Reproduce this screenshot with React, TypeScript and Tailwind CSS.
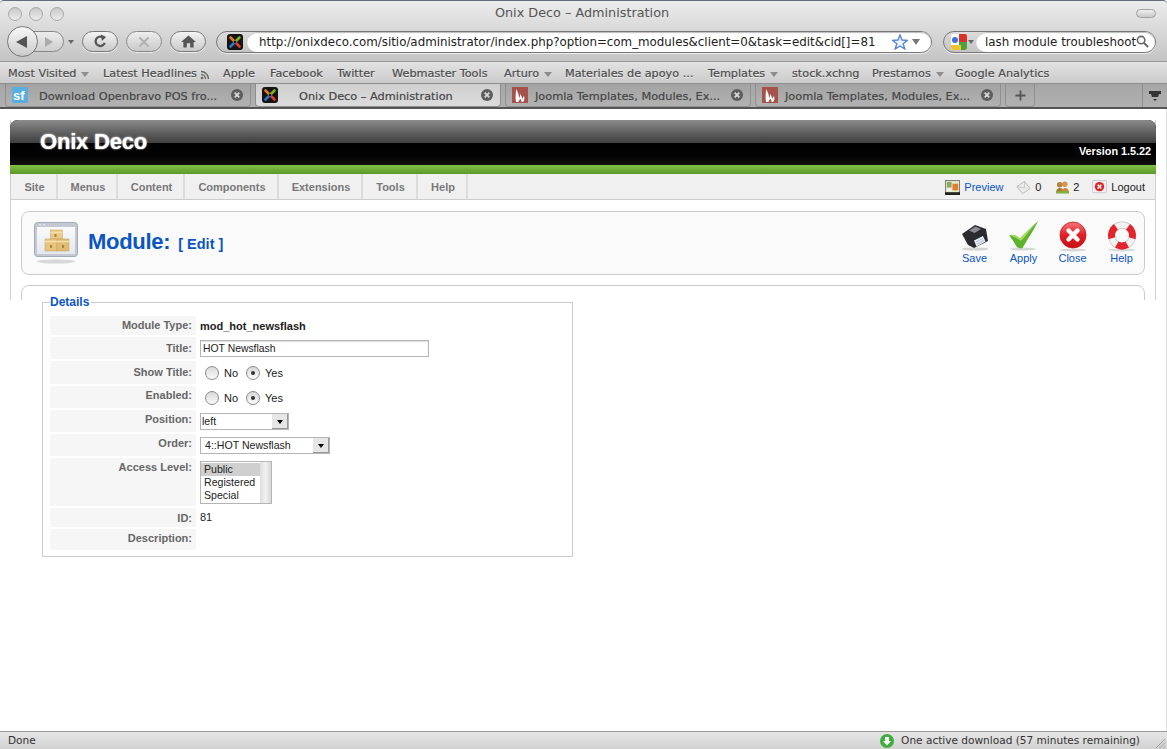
import React from "react";

const chrome = "font-['DejaVu_Sans',sans-serif]";
const page = "font-['Liberation_Sans',Arial,sans-serif]";

function Joomla({ className = "" }: { className?: string }) {
  return (
    <svg viewBox="0 0 16 16" className={className}>
      <rect x="0" y="0" width="16" height="16" rx="3" fill="#141414" />
      <path d="M3.5 3.5 L8 8" stroke="#e8791a" strokeWidth="2.6" strokeLinecap="round" />
      <path d="M12.5 3.5 L8 8" stroke="#7ab51d" strokeWidth="2.6" strokeLinecap="round" />
      <path d="M12.5 12.5 L8 8" stroke="#e23b2e" strokeWidth="2.6" strokeLinecap="round" />
      <path d="M3.5 12.5 L8 8" stroke="#2a78c8" strokeWidth="2.6" strokeLinecap="round" />
      <circle cx="8" cy="8" r="1.2" fill="#141414" />
    </svg>
  );
}

function Flame() {
  return (
    <svg viewBox="0 0 16 16" className="w-4 h-4 shrink-0">
      <rect width="16" height="16" fill="#a5524a" />
      <path d="M4 15 C3 10 4 7 4 2 C6 5 7 8 7 11 C8 10 8 9 8 7 C10 9 10 11 10 12 C11 11 11 10 12 9 C13 11 12 14 11 15 L9.5 15 C9.5 13 9 12.5 8 11.5 C8 13 6.5 13.5 6.5 15 Z" fill="#fff" />
    </svg>
  );
}

function SF() {
  return (
    <svg viewBox="0 0 16 16" className="w-4 h-4 shrink-0">
      <rect width="16" height="16" rx="1.5" fill="#58aede" />
      <text x="1" y="13" fontSize="13" fontWeight="700" fill="#fff" fontFamily="Liberation Sans">sf</text>
    </svg>
  );
}

function CloseDot() {
  return (
    <svg viewBox="0 0 12 12" className="w-3 h-3 shrink-0">
      <circle cx="6" cy="6" r="6" fill="#5d5d5d" />
      <path d="M3.7 3.7 L8.3 8.3 M8.3 3.7 L3.7 8.3" stroke="#d8d8d8" strokeWidth="1.8" />
    </svg>
  );
}

function Tab({ icon, label, active, pad }: { icon: React.ReactNode; label: string; active?: boolean; pad: string }) {
  return (
    <div
      className={`w-[246px] h-[23px] flex items-center pl-[6px] pr-[7px] rounded-b-[4px] border border-t-0 ${
        active ? "bg-gradient-to-b from-[#cfcfcf] to-[#dcdcdc] border-[#8f8f8f]" : "bg-gradient-to-b from-[#a3a3a3] to-[#b2b2b2] border-[#909090]"
      }`}
    >
      {icon}
      <span className={`flex-1 text-[11.3px] pt-[4px] text-[#454545] [-webkit-text-stroke:0.2px_#454545] whitespace-nowrap overflow-hidden ${pad}`}>
        {label}
      </span>
      <CloseDot />
    </div>
  );
}

function Arrow() {
  return <span className="inline-block ml-[5px] border-x-[4px] border-x-transparent border-t-[5px] border-t-[#8c8c8c]" />;
}

function Rss() {
  return (
    <svg viewBox="0 0 10 10" className="w-[10px] h-[10px] ml-[3px]">
      <circle cx="2" cy="8" r="1.3" fill="#666" />
      <path d="M1 4.5 A4.5 4.5 0 0 1 5.5 9 M1 1.5 A7.5 7.5 0 0 1 8.5 9" fill="none" stroke="#666" strokeWidth="1.3" />
    </svg>
  );
}

function Bookmark({ label, w, arrow, rss }: { label: string; w: string; arrow?: boolean; rss?: boolean }) {
  return (
    <div className={`${w} shrink-0 flex items-center whitespace-nowrap text-[11.25px] text-[#4b4b4b] [-webkit-text-stroke:0.2px_#4b4b4b] [text-shadow:0_1px_0_#eee]`}>
      {label}
      {arrow && <Arrow />}
      {rss && <Rss />}
    </div>
  );
}

function Pill({ className = "", children }: { className?: string; children: React.ReactNode }) {
  return (
    <div className={`h-[21px] rounded-full border border-[#777] bg-gradient-to-b from-[#f4f4f4] to-[#c9c9c9] flex items-center justify-center shadow-[0_1px_0_#eee] ${className}`}>
      {children}
    </div>
  );
}

function Floppy() {
  return (
    <svg viewBox="0 0 32 32" className="w-8 h-8">
      <ellipse cx="16" cy="28" rx="13" ry="1.6" fill="#d4d4d4" />
      <path d="M3 13 L16 4 L27 8 L29 20 L15 27 L9 24 Z" fill="#2b2b2f" />
      <path d="M10 9.5 L16.5 5.5 L22 8 L15.5 12 Z" fill="#8b8d92" />
      <path d="M15 19.5 L24 15 L26.5 20.5 L17.5 25.5 Z" fill="#e8ecf3" />
      <path d="M17 21 L24 17.5 M18 23 L25 19.5" stroke="#9fb5d6" strokeWidth="0.8" />
    </svg>
  );
}

function Check() {
  return (
    <svg viewBox="0 0 32 32" className="w-8 h-8">
      <ellipse cx="15" cy="28" rx="13" ry="1.5" fill="#d6d6d6" />
      <path d="M1 14.5 C4 13 8 14 12 17.5 C18 11 24 6 30 0 C26 9 19 19 14.5 27 C11 27.5 10 27 8.5 25.5 C6 21 3.5 17 1 14.5 Z" fill="#5fb32c" />
      <path d="M1 14.5 C4 13 8 14 12 17.5 C18 11 24 6 30 0 C24 7 19 13 13 20 C9 17 5 15 1 14.5 Z" fill="#a4dd62" />
    </svg>
  );
}

function XCircle() {
  return (
    <svg viewBox="0 0 32 32" className="w-8 h-8">
      <defs>
        <linearGradient id="xc" x1="0" y1="0" x2="0" y2="1">
          <stop offset="0" stopColor="#f47a7a" />
          <stop offset="0.5" stopColor="#e21f26" />
          <stop offset="1" stopColor="#c70f15" />
        </linearGradient>
      </defs>
      <ellipse cx="16" cy="29" rx="13" ry="1.5" fill="#d6d6d6" />
      <circle cx="16" cy="14" r="13" fill="url(#xc)" stroke="#c9151b" strokeWidth="0.8" />
      <path d="M11.5 9.5 L20.5 18.5 M20.5 9.5 L11.5 18.5" stroke="#fff" strokeWidth="4.4" strokeLinecap="round" />
    </svg>
  );
}

function Lifebuoy() {
  return (
    <svg viewBox="0 0 32 32" className="w-8 h-8">
      <ellipse cx="16" cy="29" rx="14" ry="1.5" fill="#dadada" />
      <circle cx="16" cy="14.5" r="10.5" fill="none" stroke="#c4c0c0" strokeWidth="7" />
      <circle cx="16" cy="14.5" r="10.5" fill="none" stroke="#f4f2f2" strokeWidth="5.6" />
      <path d="M22.02 5.9 A10.5 10.5 0 0 1 26.14 17.22 M9.98 5.9 A10.5 10.5 0 0 0 5.86 17.22 M21.25 23.59 A10.5 10.5 0 0 1 10.75 23.59" fill="none" stroke="#e4232a" strokeWidth="7" />
    </svg>
  );
}

function ToolButton({ icon, label }: { icon: React.ReactNode; label: string }) {
  return (
    <div className="w-[49px] flex flex-col items-center">
      {icon}
      <span className="text-[11px] leading-[13px] text-[#0b55c4] -mt-[1px]">{label}</span>
    </div>
  );
}

function ModuleIcon() {
  return (
    <svg viewBox="0 0 44 42" className="w-[44px] h-[42px]">
      <defs>
        <linearGradient id="mi" x1="0" y1="0" x2="0" y2="1">
          <stop offset="0" stopColor="#f9fafb" />
          <stop offset="1" stopColor="#e4e7ee" />
        </linearGradient>
      </defs>
      <ellipse cx="22" cy="39.5" rx="19" ry="2" fill="#d8d8d8" />
      <rect x="0.5" y="0.5" width="43" height="34" rx="3" fill="#c3c8d2" stroke="#a4abb8" />
      <rect x="3" y="5" width="38" height="27" fill="url(#mi)" />
      <circle cx="6" cy="2.8" r="1" fill="#e6e8ec" />
      <circle cx="10" cy="2.8" r="1" fill="#e6e8ec" />
      <g stroke="#c0a060" strokeWidth="0.5">
        <rect x="16.5" y="8" width="12" height="9" fill="#ecc986" />
        <rect x="11" y="17" width="12" height="12" fill="#e8c47c" />
        <rect x="23" y="17" width="12" height="12" fill="#e2bb72" />
      </g>
      <path d="M11 19.5h12M23 19.5h12M16.5 10.5h12" stroke="#f6e0ae" strokeWidth="1.4" />
      <path d="M21.5 12v3M17 23v3M29 23v3" stroke="#a88444" strokeWidth="2" />
    </svg>
  );
}

function Row({ label, h, children, top }: { label: string; h: string; children?: React.ReactNode; top?: string }) {
  return (
    <div className={`flex ${h}`}>
      <div className={`w-[146px] shrink-0 bg-[#f6f6f6] pr-[4px] text-right font-bold text-[11px] leading-[13px] text-[#666] ${top ?? "pt-[3px]"}`}>{label}:</div>
      <div className="flex-1 pl-[4px] text-[11px] text-[#1a1a1a]">{children}</div>
    </div>
  );
}

function Radio({ on }: { on?: boolean }) {
  return (
    <span className="w-[14px] h-[14px] shrink-0 rounded-full border border-[#8a8a8a] bg-gradient-to-b from-[#d8d8d8] to-[#fbfbfb] flex items-center justify-center">
      {on && <span className="w-[4px] h-[4px] rounded-full bg-[#333]" />}
    </span>
  );
}

function YesNo() {
  return (
    <div className="flex items-center pl-[5px] h-[16px] mt-[4px]">
      <Radio />
      <span className="ml-[5px] w-[22px]">No</span>
      <Radio on />
      <span className="ml-[5px]">Yes</span>
    </div>
  );
}

function SelectBox({ label, w, textPad }: { label: string; w: string; textPad: string }) {
  return (
    <div className={`${w} h-[17px] mt-[3px] flex items-center border border-[#b5b5b5] bg-white`}>
      <span className={`flex-1 ${textPad} text-[#222] text-[10.6px] leading-[15px]`}>{label}</span>
      <span className="w-[17px] h-[15px] bg-[#e6e6e6] border-l border-[#fff] shadow-[inset_-1px_-1px_0_#999] flex items-center justify-center">
        <span className="border-x-[3.5px] border-x-transparent border-t-[4px] border-t-black" />
      </span>
    </div>
  );
}

export default function App() {
  return (
    <div className={`w-[1167px] h-[749px] overflow-hidden flex flex-col bg-white ${chrome}`}>
      {/* title + nav */}
      <div className="h-[62px] shrink-0 border-t border-[#666b7c] border-b border-b-[#9a9a9a] bg-gradient-to-b from-[#ececec] to-[#c4c4c4] rounded-t-[4px] flex flex-col">
        <div className="h-[25px] shrink-0 flex items-center pl-[8px] relative">
          <div className="flex gap-[7px]">
            <span className="w-[14px] h-[14px] rounded-full border border-[#a8a8a8] bg-gradient-to-b from-[#c8c8c8] to-[#ececec]" />
            <span className="w-[14px] h-[14px] rounded-full border border-[#a8a8a8] bg-gradient-to-b from-[#c8c8c8] to-[#ececec]" />
            <span className="w-[14px] h-[14px] rounded-full border border-[#a8a8a8] bg-gradient-to-b from-[#c8c8c8] to-[#ececec]" />
          </div>
          <div className="flex-1 text-center text-[12.8px] text-[#555] -ml-[36px] pb-[2px]">Onix Deco – Administration</div>
          <span className="w-[20px] h-[9px] mr-[11px] rounded-full border border-[#a0a0a0] bg-gradient-to-b from-[#f0f0f0] to-[#c8c8c8]" />
        </div>
        <div className="flex items-center pl-[7px] h-[31px] shrink-0">
          <div className="relative w-[57px] h-[31px] shrink-0 flex items-center">
            <div className="absolute left-[20px] top-[5px] w-[37px] h-[21px] rounded-r-full border border-[#888] bg-gradient-to-b from-[#ececec] to-[#cfcfcf] flex items-center justify-end pr-[10px]">
              <span className="border-y-[5px] border-y-transparent border-l-[8px] border-l-[#aaa]" />
            </div>
            <div className="absolute left-0 top-0 w-[31px] h-[31px] rounded-full border border-[#777] bg-gradient-to-b from-[#f8f8f8] to-[#cbcbcb] flex items-center justify-center">
              <span className="border-y-[6px] border-y-transparent border-r-[11px] border-r-[#555] -ml-[2px]" />
            </div>
          </div>
          <span className="ml-[4px] border-x-[3.5px] border-x-transparent border-t-[4px] border-t-[#666]" />
          <Pill className="w-[36px] ml-[8px]">
            <svg viewBox="0 0 16 16" className="w-[15px] h-[15px]">
              <path d="M12.5 9.5 A5 5 0 1 1 10.5 3.6" fill="none" stroke="#555" strokeWidth="2.4" />
              <path d="M8.5 0.5 L14 3.2 L9.5 7.5 Z" fill="#555" />
            </svg>
          </Pill>
          <Pill className="w-[36px] ml-[8px] opacity-80">
            <svg viewBox="0 0 12 12" className="w-[12px] h-[12px]">
              <path d="M1.5 1.5 L10.5 10.5 M10.5 1.5 L1.5 10.5" stroke="#a8a8a8" strokeWidth="2" />
            </svg>
          </Pill>
          <Pill className="w-[36px] ml-[8px]">
            <svg viewBox="0 0 16 14" className="w-[15px] h-[13px]">
              <path d="M8 0.5 L16 7.5 L13.5 7.5 L13.5 13.5 L9.8 13.5 L9.8 9 L6.2 9 L6.2 13.5 L2.5 13.5 L2.5 7.5 L0 7.5 Z" fill="#555" />
            </svg>
          </Pill>
          <div className="w-[716px] h-[22px] ml-[10px] rounded-full border border-[#777] bg-gradient-to-b from-[#dcdcdc] to-[#c4c4c4] flex items-center pl-[10px] shadow-[0_1px_0_#eee]">
            <Joomla className="w-4 h-4 shrink-0" />
            <div className="flex-1 h-[20px] ml-[4px] rounded-full bg-white flex items-center pl-[12px] pr-[11px] shadow-[inset_0_1px_1px_#bbb]">
              <span className="flex-1 min-w-0 pt-[2px] text-[11.85px] text-[#222] whitespace-nowrap">http://onixdeco.com/sitio/administrator/index.php?option=com_modules&amp;client=0&amp;task=edit&amp;cid[]=81</span>
              <svg viewBox="0 0 16 16" className="w-[16px] h-[16px]">
                <path d="M8 1 L10 6 L15.5 6.3 L11.2 9.7 L12.8 15 L8 12 L3.2 15 L4.8 9.7 L0.5 6.3 L6 6 Z" fill="#eef3fb" stroke="#4c82d8" strokeWidth="1.3" />
              </svg>
              <span className="ml-[4px] border-x-[4.5px] border-x-transparent border-t-[6px] border-t-[#777]" />
            </div>
          </div>
          <div className="w-[213px] h-[22px] ml-[11px] rounded-full border border-[#777] bg-gradient-to-b from-[#dcdcdc] to-[#c4c4c4] flex items-center pl-[7px] shadow-[0_1px_0_#eee]">
            <svg viewBox="0 0 16 16" className="w-4 h-4 shrink-0">
              <rect width="16" height="16" rx="2" fill="#fff" />
              <path d="M8 0 H14 Q16 0 16 2 V8 H8 Z" fill="#d8322a" />
              <path d="M8 8 H16 V14 Q16 16 14 16 H8 Z" fill="#4aa33f" />
              <path d="M0 11 H10 V16 H2 Q0 16 0 14 Z" fill="#f1c232" />
              <circle cx="4" cy="6" r="3" fill="#3f73d8" />
            </svg>
            <span className="ml-[1px] border-x-[3px] border-x-transparent border-t-[4px] border-t-[#666]" />
            <div className="flex-1 h-[20px] ml-[2px] rounded-full bg-white flex items-center pl-[9px] pr-[6px] shadow-[inset_0_1px_1px_#bbb]">
              <span className="flex-1 pt-[2px] text-[11.85px] text-[#222] whitespace-nowrap">lash module troubleshoot</span>
              <svg viewBox="0 0 14 14" className="w-[13px] h-[13px] shrink-0">
                <circle cx="5.5" cy="5.5" r="4" fill="none" stroke="#666" strokeWidth="1.7" />
                <path d="M8.5 8.5 L13 13" stroke="#666" strokeWidth="2.2" />
              </svg>
            </div>
          </div>
        </div>
      </div>

      {/* bookmarks */}
      <div className="h-[22px] shrink-0 pl-[8px] pt-[4px] flex items-center bg-gradient-to-b from-[#e2e2e2] to-[#cbcbcb] border-b border-[#8f8f8f]">
        <Bookmark label="Most Visited" w="w-[95px]" arrow />
        <Bookmark label="Latest Headlines" w="w-[120px]" rss />
        <Bookmark label="Apple" w="w-[47px]" />
        <Bookmark label="Facebook" w="w-[67px]" />
        <Bookmark label="Twitter" w="w-[55px]" />
        <Bookmark label="Webmaster Tools" w="w-[112px]" />
        <Bookmark label="Arturo" w="w-[61px]" arrow />
        <Bookmark label="Materiales de apoyo ..." w="w-[143px]" />
        <Bookmark label="Templates" w="w-[84px]" arrow />
        <Bookmark label="stock.xchng" w="w-[80px]" />
        <Bookmark label="Prestamos" w="w-[83px]" arrow />
        <Bookmark label="Google Analytics" w="w-[100px]" />
      </div>

      {/* tabs */}
      <div className="h-[25px] shrink-0 flex items-start gap-[4px] pl-[5px] bg-gradient-to-b from-[#a6a6a6] to-[#b0b0b0] border-b-2 border-[#555]">
        <Tab icon={<SF />} label="Download Openbravo POS fro..." pad="pl-[11px]" />
        <Tab icon={<Joomla className="w-4 h-4 shrink-0" />} label="Onix Deco – Administration" active pad="pl-[21px]" />
        <Tab icon={<Flame />} label="Joomla Templates, Modules, Ex..." pad="pl-[7px]" />
        <Tab icon={<Flame />} label="Joomla Templates, Modules, Ex..." pad="pl-[7px]" />
        <div className="w-[30px] h-[23px] rounded-b-[4px] border border-t-0 border-[#909090] bg-gradient-to-b from-[#a3a3a3] to-[#b2b2b2] flex items-center justify-center">
          <svg viewBox="0 0 12 12" className="w-[11px] h-[11px]">
            <path d="M6 0.5 V11.5 M0.5 6 H11.5" stroke="#555" strokeWidth="2" />
          </svg>
        </div>
        <div className="ml-auto w-[25px] h-[23px] border-l border-[#8f8f8f] flex items-center justify-center">
          <svg viewBox="0 0 14 12" className="w-[14px] h-[12px]">
            <path d="M1 1 H13 V4 H11 L10 7 H4 L3 4 H1 Z" fill="#333" />
            <path d="M5 9 H9 L7 11 Z" fill="#333" />
          </svg>
        </div>
      </div>

      {/* page */}
      <div className={`flex-1 min-h-0 flex flex-col border-r border-[#dedede] ${page}`}>
        <div className="mx-[10px] mt-[11px] h-[180px] shrink-0 flex flex-col border-x border-[#d0d0d0]">
          <div className="h-[45px] shrink-0 -mx-[1px] rounded-t-[8px] relative flex flex-col bg-black overflow-hidden">
            <div className="h-[23px] bg-gradient-to-b from-[#8b8b8b] to-[#3f3f3f]" />
            <div className="flex-1 bg-gradient-to-b from-[#000] to-[#111]" />
            <span className="absolute left-[30px] top-[9px] text-[22px] leading-[26px] font-bold text-white tracking-[-0.2px] [text-shadow:0_0_2px_#fff]">Onix Deco</span>
            <span className="absolute right-[5px] top-[24px] text-[10.8px] leading-[14px] font-bold text-white">Version 1.5.22</span>
          </div>
          <div className="h-[9px] shrink-0 -mx-[1px] bg-gradient-to-b from-[#82c043] to-[#5a9a2c]" />
          <div className="h-[26px] shrink-0 flex items-center bg-[#f0f0f0] border-b border-[#ccc]">
            {[
              ["Site", "w-[47px]"],
              ["Menus", "w-[60px]"],
              ["Content", "w-[67px]"],
              ["Components", "w-[94px]"],
              ["Extensions", "w-[84px]"],
              ["Tools", "w-[55px]"],
              ["Help", "w-[50px]"],
            ].map(([t, w]) => (
              <div key={t} className={`${w} h-full shrink-0 flex items-center justify-center pl-[2px] pt-[1px] border-r-2 border-[#dcdcdc] text-[11px] font-bold text-[#787878]`}>
                {t}
              </div>
            ))}
            <div className="ml-auto flex items-center pt-[1px] text-[11px] text-[#222] pr-[10px]">
              <svg viewBox="0 0 16 16" className="w-[15px] h-[15px]">
                <rect x="0.5" y="0.5" width="15" height="15" fill="#e4e6c8" stroke="#777" />
                <rect x="2" y="2" width="5" height="6" fill="#8aa868" />
                <rect x="8" y="4" width="6" height="7" fill="#df7f2b" />
                <rect x="2" y="9" width="5" height="3" fill="#f4f4f4" />
                <rect x="0" y="13" width="16" height="3" fill="#222" />
              </svg>
              <span className="ml-[4px] w-[52px] text-[#0b55c4]">Preview</span>
              <svg viewBox="0 0 16 16" className="w-[15px] h-[15px]">
                <path d="M1 7 L9 1.5 L15 9 L7 14.5 Z" fill="#ececec" stroke="#b8b8b8" />
                <path d="M1 7 L9 8.5 L9 1.5" fill="none" stroke="#c4c4c4" />
              </svg>
              <span className="ml-[4px] w-[21px]">0</span>
              <svg viewBox="0 0 14 14" className="w-[13px] h-[13px]">
                <circle cx="4" cy="4" r="3" fill="#b8803c" />
                <circle cx="9.5" cy="3.5" r="3" fill="#d19a4a" />
                <path d="M0 12 C0.5 6 8 6 8.5 12 Z" fill="#a9772f" />
                <path d="M6 12 C6.5 6 13.5 6 14 12 Z" fill="#c48c3f" />
                <rect x="0" y="11" width="14" height="2.5" fill="#7fb23e" />
              </svg>
              <span className="ml-[4px] w-[19px]">2</span>
              <svg viewBox="0 0 16 16" className="w-[15px] h-[15px]">
                <rect x="0.5" y="0.5" width="15" height="13" rx="1" fill="#f0eef0" stroke="#c9c9d0" />
                <circle cx="8" cy="7" r="5" fill="#d9262c" />
                <path d="M6 5 L10 9 M10 5 L6 9" stroke="#fff" strokeWidth="1.5" />
              </svg>
              <span className="ml-[4px]">Logout</span>
            </div>
          </div>
          <div className="h-[64px] shrink-0 mx-[10px] mt-[11px] rounded-[8px] border border-[#ccc] bg-[#fafafa] flex items-center pl-[12px]">
            <ModuleIcon />
            <span className="ml-[10px] text-[22px] leading-[28px] font-bold text-[#0b55c4] -mt-[2px] tracking-[-0.3px]">Module:</span>
            <span className="ml-[8px] text-[14.5px] leading-[16px] font-bold text-[#0b55c4] mt-[2px]">[ Edit ]</span>
            <div className="ml-auto flex -mr-[2px]">
              <ToolButton icon={<Floppy />} label="Save" />
              <ToolButton icon={<Check />} label="Apply" />
              <ToolButton icon={<XCircle />} label="Close" />
              <ToolButton icon={<Lifebuoy />} label="Help" />
            </div>
          </div>
          <div className="h-[15px] shrink-0 mx-[10px] mt-[10px] overflow-hidden">
            <div className="h-[40px] rounded-[8px] border border-[#ccc] bg-white" />
          </div>
        </div>

        <fieldset className="ml-[42px] w-[531px] h-[263px] -mt-[6px] border border-[#ccc] px-[7px] pt-[6px] pb-0 min-w-0">
          <legend className="px-0 pr-[2px] text-[12px] leading-[16px] font-bold text-[#0b55c4]">Details</legend>
          <div className="flex flex-col gap-[2px]">
            <Row label="Module Type" h="h-[19px]">
              <div className="font-bold pt-[2px] text-[#222]">mod_hot_newsflash</div>
            </Row>
            <Row label="Title" h="h-[22px]" top="pt-[5px]">
              <div className="w-[229px] h-[17px] mt-[3px] border border-[#b5b5b5] shadow-[inset_0_1px_1px_#ddd] pl-[2px] text-[10.4px] leading-[15px] text-[#222]">HOT Newsflash</div>
            </Row>
            <Row label="Show Title" h="h-[23px]" top="pt-[5px]">
              <YesNo />
            </Row>
            <Row label="Enabled" h="h-[22px]" top="pt-[3px]">
              <YesNo />
            </Row>
            <Row label="Position" h="h-[22px]" top="pt-[3px]">
              <SelectBox label="left" w="w-[89px]" textPad="pl-[1px]" />
            </Row>
            <Row label="Order" h="h-[22px]" top="pt-[3px]">
              <SelectBox label="4::HOT Newsflash" w="w-[130px]" textPad="pl-[4px]" />
            </Row>
            <Row label="Access Level" h="h-[48px]" top="pt-[3px]">
              <div className="w-[72px] h-[43px] mt-[3px] border border-[#b5b5b5] flex text-[10.6px] leading-[13px] text-[#222] overflow-hidden">
                <div className="flex-1 pt-[1px]">
                  <div className="bg-[#cfcfcf] pl-[3px]">Public</div>
                  <div className="pl-[3px]">Registered</div>
                  <div className="pl-[3px]">Special</div>
                </div>
                <div className="w-[11px] bg-gradient-to-r from-[#dedede] via-[#f2f2f2] to-[#d8d8d8]" />
              </div>
            </Row>
            <Row label="ID" h="h-[19px]" top="pt-[4px]">
              <div className="pt-[1px] text-[#222]">81</div>
            </Row>
            <Row label="Description" h="h-[21px]" top="pt-[3px]" />
          </div>
        </fieldset>
        <div className="flex-1" />
      </div>

      {/* status */}
      <div className="h-[18px] shrink-0 relative flex items-center pl-[8px] pr-[27px] pt-[1px] border-t border-[#9a9a9a] bg-gradient-to-b from-[#e6e6e6] to-[#d2d2d2] text-[10.55px] text-[#333]">
        <span>Done</span>
        <svg viewBox="0 0 14 14" className="ml-auto w-[14px] h-[14px]">
          <circle cx="7" cy="7" r="7" fill="#3fae3f" />
          <path d="M5 3 H9 V7 H11 L7 11.5 L3 7 H5 Z" fill="#fff" />
        </svg>
        <span className="ml-[7px]">One active download (57 minutes remaining)</span>
        <svg viewBox="0 0 12 12" className="absolute right-[1px] bottom-0 w-[11px] h-[11px]">
          <path d="M1 11 L11 1 M5 11 L11 5 M9 11 L11 9" stroke="#999" />
        </svg>
      </div>
    </div>
  );
}
